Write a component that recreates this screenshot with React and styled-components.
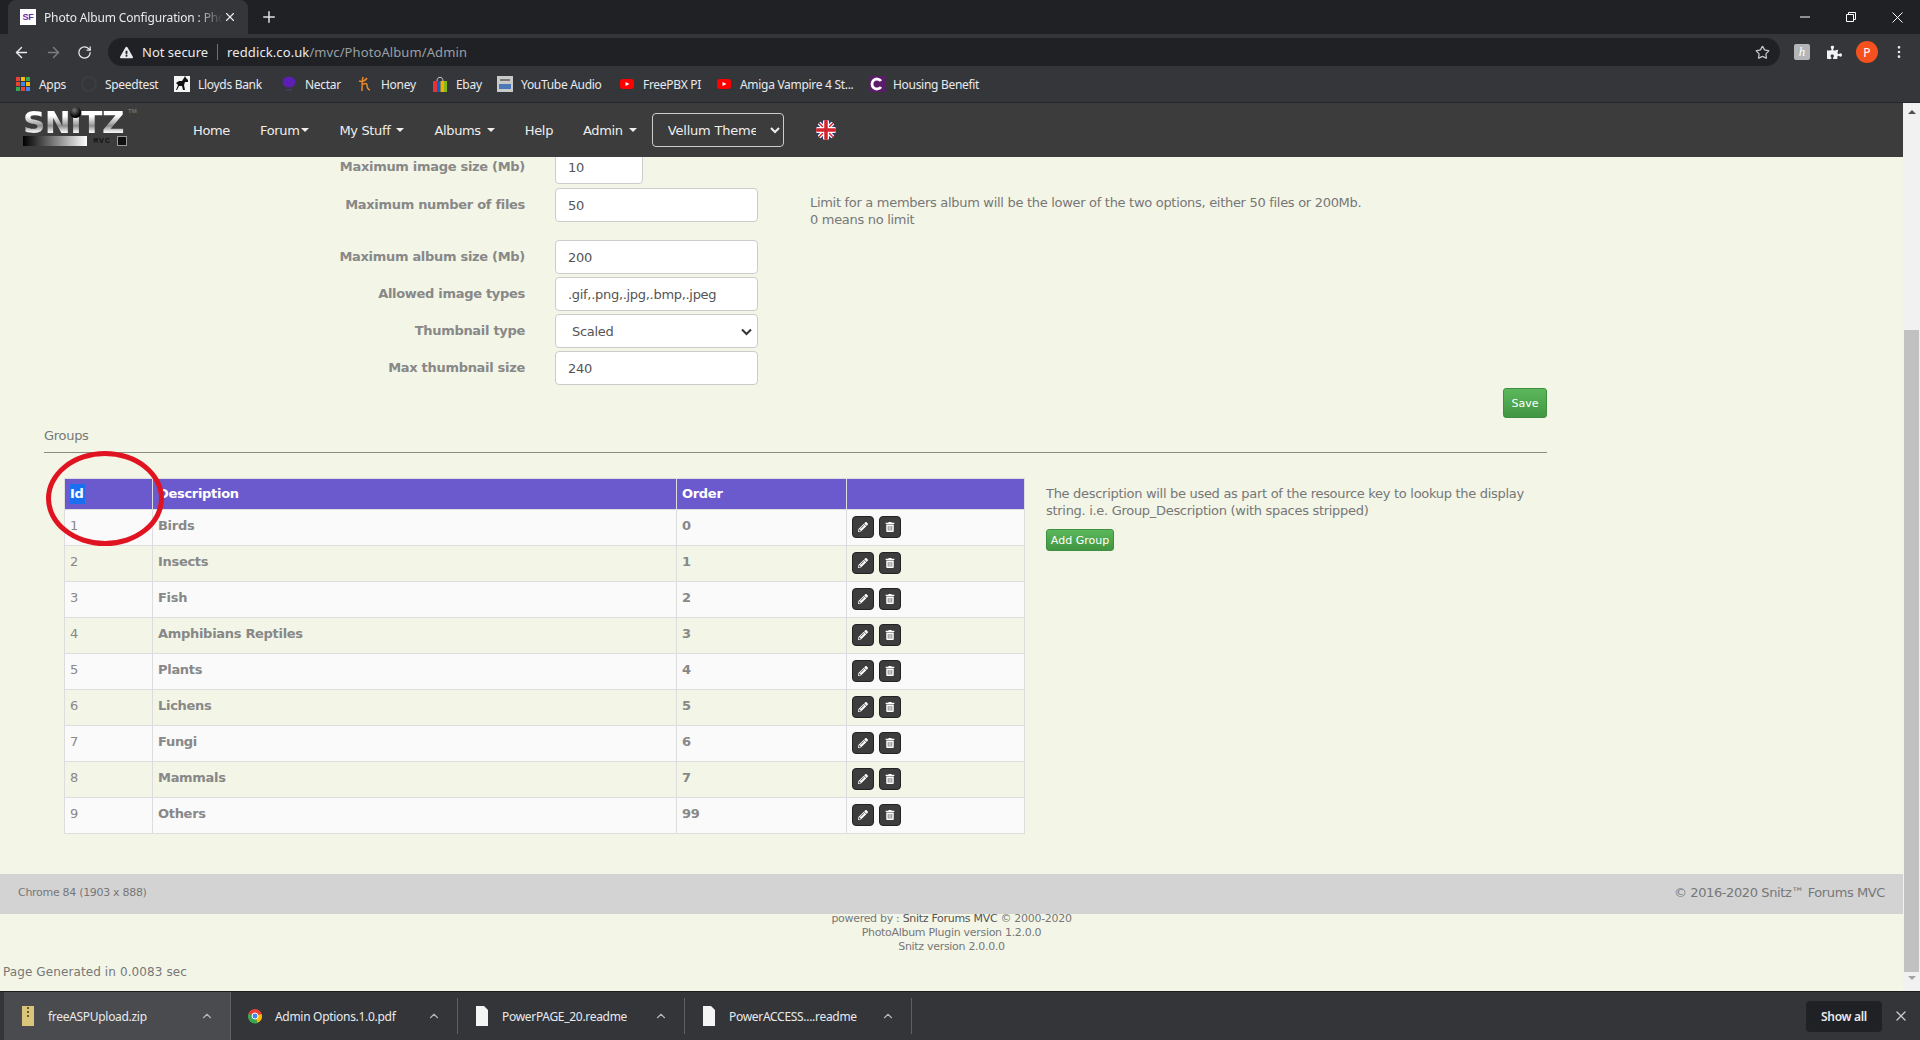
import React from "react";
import styled, { createGlobalStyle } from "styled-components";
import { ArrowLeft, ArrowRight, RotateCw, Star, Plus, X, EllipsisVertical, ChevronUp } from "lucide-react";
import { FaExclamationTriangle, FaPuzzlePiece, FaPencilAlt, FaTrashAlt } from "react-icons/fa";

const GlobalStyle = createGlobalStyle`
  html, body { margin: 0; padding: 0; height: 100%; overflow: hidden; }
  #root { height: 100%; }
  * { box-sizing: border-box; }
`;

const chromeFont = `"Noto Sans", "Liberation Sans", sans-serif`;
const pageFont = `"DejaVu Sans", "Liberation Sans", sans-serif`;

const Window = styled.div`
  width: 1920px;
  height: 1040px;
  display: flex;
  flex-direction: column;
  overflow: hidden;
  background: #f3f5e7;
  font-family: ${pageFont};
`;

const TabStrip = styled.div`
  height: 34px;
  flex: none;
  background: #202124;
  display: flex;
  padding-left: 8px;
  color: #e8eaed;
  font-family: ${chromeFont};
`;

const Tab = styled.div`
  width: 240px;
  height: 34px;
  background: #35363a;
  border-radius: 8px 8px 0 0;
  display: flex;
  align-items: center;
  padding: 0 11px 0 12px;
  font-size: 12px;
  letter-spacing: -0.15px;
`;

const Favicon = styled.div`
  width: 16px;
  height: 16px;
  background: #fff;
  color: #6a2bb0;
  font: bold 9px "Liberation Sans", sans-serif;
  display: flex;
  align-items: center;
  justify-content: center;
  margin-right: 8px;
  flex: none;
`;

const TabTitle = styled.div`
  flex: 1;
  white-space: nowrap;
  overflow: hidden;
  mask-image: linear-gradient(to right, #000 85%, transparent);
`;

const NewTab = styled.div`
  margin-left: 12px;
  display: flex;
  align-items: center;
  color: #dfe1e5;
`;

const WindowButtons = styled.div`
  margin-left: auto;
  display: flex;
  align-items: center;
  color: #fff;
`;

const WindowButton = styled.div`
  width: 46px;
  height: 28px;
  display: flex;
  align-items: center;
  justify-content: center;
`;

const Toolbar = styled.div`
  height: 36px;
  flex: none;
  background: #35363a;
  display: flex;
  align-items: center;
  padding-left: 13px;
  color: #e8eaed;
  font-family: ${chromeFont};
`;

const ToolIcon = styled.div`
  width: 32px;
  flex: none;
  display: flex;
  align-items: center;
  color: ${(p) => (p.$dim ? "#7b7d80" : "#e8eaed")};
`;

const AddressBar = styled.div`
  width: 1672px;
  margin-left: -1px;
  height: 28px;
  border-radius: 14px;
  background: #202124;
  display: flex;
  align-items: center;
  padding-left: 12px;
  font-size: 13px;
`;

const NotSecure = styled.span`
  margin-left: 9px;
  padding-right: 9px;
  border-right: 1px solid #70737a;
  line-height: 16px;
`;

const Host = styled.span`
  margin-left: 9px;
  letter-spacing: 0.1px;
`;

const Path = styled.span`
  color: #9aa0a6;
`;

const StarBox = styled.div`
  margin-left: auto;
  margin-right: 10px;
  display: flex;
  color: #c4c7ca;
`;

const ToolRight = styled.div`
  display: flex;
  align-items: center;
  margin-left: 14px;
`;

const ExtBox = styled.div`
  width: 16px;
  height: 16px;
  border-radius: 2px;
  background: #b4b5b7;
  color: #fff;
  font: italic 13px "Liberation Serif", serif;
  display: flex;
  align-items: center;
  justify-content: center;
`;

const Puzzle = styled.div`
  margin-left: 17px;
  display: flex;
  color: #f1f3f4;
`;

const Avatar = styled.div`
  margin-left: 14px;
  width: 22px;
  height: 22px;
  border-radius: 50%;
  background: #f4511e;
  color: #fff;
  font-size: 12px;
  display: flex;
  align-items: center;
  justify-content: center;
`;

const Dots = styled.div`
  margin-left: 13px;
  display: flex;
  color: #e8eaed;
`;

const Bookmarks = styled.div`
  height: 33px;
  flex: none;
  background: #35363a;
  border-bottom: 1px solid #26272a;
  display: flex;
  align-items: center;
  padding: 0 0 4px 15px;
  color: #e8eaed;
  font-size: 12px;
  letter-spacing: -0.3px;
  font-family: ${chromeFont};
`;

const Bookmark = styled.div`
  width: ${(p) => p.$w}px;
  flex: none;
  display: flex;
  align-items: center;
  white-space: nowrap;
`;

const BookmarkIcon = styled.svg`
  width: 16px;
  height: 16px;
  flex: none;
  margin-right: 8px;
`;

const Body = styled.div`
  flex: 1;
  min-height: 0;
  display: flex;
`;

const Page = styled.div`
  width: 1903px;
  flex: none;
  display: flex;
  flex-direction: column;
  min-height: 0;
`;

const NavBar = styled.div`
  height: 54px;
  flex: none;
  background: #3c3c3c;
  display: flex;
  align-items: center;
  padding-left: 23px;
  color: #eee;
  font-size: 13px;
  font-family: ${pageFont};
  position: relative;
  z-index: 2;
`;

const Logo = styled.div`
  width: 104px;
  height: 39px;
  flex: none;
  margin: 0 66px 7px 0;
  display: flex;
  flex-direction: column;
  position: relative;
`;

const LogoWord = styled.div`
  font: bold 31px/27px "DejaVu Sans", sans-serif;
  letter-spacing: -0.5px;
  height: 27px;
  margin-top: 2px;
  white-space: nowrap;
  background: linear-gradient(#ffffff 25%, #a8a8a8 55%, #8c8c8c 62%, #f2f2f2 85%);
  -webkit-background-clip: text;
  background-clip: text;
  color: transparent;
`;

const LogoBall = styled.div`
  position: absolute;
  left: 47px;
  top: 0;
  width: 11px;
  height: 11px;
  border-radius: 50%;
  background: radial-gradient(circle at 40% 30%, #777, #000 65%);
`;

const LogoMark = styled.div`
  position: absolute;
  left: 105px;
  top: 1px;
  font: 6px "Liberation Sans", sans-serif;
  color: #888;
`;

const LogoBar = styled.div`
  height: 10px;
  width: 104px;
  display: flex;
  align-items: center;
`;

const LogoFade = styled.div`
  width: 64px;
  height: 100%;
  background: linear-gradient(to right, #000, #fff);
`;

const LogoTag = styled.div`
  flex: 1;
  font: bold 8px/10px "Liberation Mono", monospace;
  letter-spacing: 1px;
  color: #141414;
  text-align: center;
`;

const LogoEnd = styled.div`
  width: 10px;
  height: 100%;
  background: #111;
  border: 1px solid #999;
`;

const NavItem = styled.div`
  margin-right: ${(p) => p.$gap ?? 30}px;
  white-space: nowrap;
  display: flex;
  align-items: center;
  letter-spacing: -0.35px;
`;

const Caret = styled.span`
  width: 0;
  height: 0;
  margin-left: ${(p) => p.$gap ?? 6}px;
  border-left: 4px solid transparent;
  border-right: 4px solid transparent;
  border-top: 4px solid #eee;
`;

const ThemeSelect = styled.select`
  width: 132px;
  height: 34px;
  background: #3c3c3c;
  color: #eee;
  border: 1px solid #ccc;
  border-radius: 4px;
  font: 13px ${pageFont};
  letter-spacing: -0.2px;
  padding: 0 11px;
  margin-right: 32px;
`;

const Flag = styled.svg`
  width: 20px;
  height: 20px;
  flex: none;
`;

const Scroller = styled.div`
  flex: 1;
  min-height: 0;
  overflow: hidden;
  position: relative;
`;

const ScrolledContent = styled.div`
  margin-top: -7px;
  display: flex;
  flex-direction: column;
  color: #777;
  font-size: 13px;
  letter-spacing: -0.3px;
`;

const FormRows = styled.div`
  display: flex;
  flex-direction: column;
`;

const FormRow = styled.div`
  display: flex;
  height: 34px;
  margin-bottom: ${(p) => p.$gap ?? 3}px;
  align-items: center;
`;

const Label = styled.div`
  width: 525px;
  flex: none;
  text-align: right;
  font-weight: bold;
  font-size: 13px;
  color: #888;
  margin-top: -2px;
`;

const Input = styled.div`
  margin-left: 30px;
  width: ${(p) => p.$w ?? 203}px;
  height: 34px;
  flex: none;
  background: #fff;
  border: 1px solid #ccc;
  border-radius: 4px;
  display: flex;
  align-items: center;
  padding-left: ${(p) => p.$pad ?? 12}px;
  color: #555;
  font-size: 13px;
  position: relative;
`;

const SelectArrow = styled.svg`
  position: absolute;
  right: 5px;
  top: 13px;
  width: 11px;
  height: 8px;
`;

const Hint = styled.div`
  margin-left: 52px;
  line-height: 17px;
  margin-top: 11px;
`;

const SaveRow = styled.div`
  width: 1547px;
  display: flex;
  justify-content: flex-end;
`;

const GreenButton = styled.div`
  background: linear-gradient(#5cb85c, #419641);
  border: 1px solid #3e8f3e;
  border-radius: 3px;
  color: #fff;
  font-size: 11px;
  letter-spacing: 0;
  display: flex;
  align-items: center;
  justify-content: center;
  width: ${(p) => p.$w}px;
  height: ${(p) => p.$h}px;
`;

const GroupsTitle = styled.div`
  margin: 9px 0 0 44px;
  width: 1503px;
  height: 26px;
  border-bottom: 1px solid #8b8d80;
  line-height: 18px;
  font-size: 13px;
`;

const GroupsArea = styled.div`
  display: flex;
  margin: 25px 0 0 64px;
  align-items: flex-start;
`;

const Table = styled.table`
  border-collapse: collapse;
  table-layout: fixed;
  width: 961px;
  flex: none;
`;

const Th = styled.th`
  background: #6a5acd;
  color: #fff;
  height: 31px;
  padding: 0 5px 1px;
  text-align: left;
  font-size: 13px;
  border: 1px solid #ddd;
  width: ${(p) => (p.$w ? `${p.$w}px` : "auto")};
`;

const Selected = styled.span`
  display: inline-block;
  background: #1a6ef0;
  line-height: 20px;
  padding-right: 1px;
`;

const Row = styled.tr`
  background: ${(p) => (p.$alt ? "#f3f5e7" : "#fafafa")};
`;

const Td = styled.td`
  height: 36px;
  padding: 6px 5px 0;
  vertical-align: top;
  border: 1px solid #ddd;
  color: #888;
  font-weight: ${(p) => (p.$bold ? "bold" : "normal")};
  font-size: 13px;
  line-height: 18px;
`;

const CellText = styled.div`
  margin-top: 1px;
`;

const Actions = styled.div`
  display: flex;
  gap: 5px;
`;

const ActionButton = styled.div`
  width: 22px;
  height: 22px;
  background: #3d3d3d;
  border: 1px solid #222;
  border-radius: 4px;
  color: #fff;
  display: flex;
  align-items: center;
  justify-content: center;
  font-size: 10px;
`;

const Side = styled.div`
  margin-left: 21px;
  width: 490px;
  padding-top: 7px;
  line-height: 17px;
`;

const SideText = styled.div`
  margin-bottom: 10px;
`;

const FooterBand = styled.div`
  margin-top: 40px;
  height: 40px;
  background: #d3d3d3;
  display: flex;
  align-items: center;
  justify-content: space-between;
  padding: 0 18px 3px;
  font-size: 11px;
`;

const Copyright = styled.div`
  font-size: 13px;
  letter-spacing: -0.4px;
`;

const PoweredBy = styled.div`
  margin-top: -2px;
  text-align: center;
  font-size: 11px;
  line-height: 14px;
  letter-spacing: -0.3px;
`;

const PoweredName = styled.span`
  color: #555;
`;

const Generated = styled.div`
  margin: 11px 0 0 3px;
  font-size: 12px;
  letter-spacing: 0.1px;
`;

const Circle = styled.div`
  position: absolute;
  left: 46px;
  top: 294px;
  width: 118px;
  height: 95px;
  border: 5px solid #e01420;
  border-radius: 50%;
  pointer-events: none;
`;

const ScrollBar = styled.div`
  width: 17px;
  flex: none;
  background: #f1f1f1;
  display: flex;
  flex-direction: column;
  align-items: center;
`;

const ScrollArrow = styled.div`
  width: 0;
  height: 0;
  margin-top: ${(p) => p.$top}px;
  border-left: 4px solid transparent;
  border-right: 4px solid transparent;
  ${(p) => (p.$down ? "border-top: 4px solid #a3a3a3;" : "border-bottom: 4px solid #505050;")}
`;

const ScrollThumb = styled.div`
  width: 15px;
  height: 642px;
  margin-top: 216px;
  background: #c1c1c1;
`;

const Downloads = styled.div`
  height: 49px;
  flex: none;
  background: #333539;
  border-top: 1px solid #1c1d1f;
  display: flex;
  align-items: center;
  padding-left: 4px;
  color: #e8eaed;
  font-size: 12px;
  letter-spacing: -0.3px;
  font-family: ${chromeFont};
`;

const DownloadItem = styled.div`
  width: 227px;
  height: ${(p) => (p.$active ? 48 : 36)}px;
  flex: none;
  display: flex;
  align-items: center;
  padding-left: 17px;
  background: ${(p) => (p.$active ? "#4a4b4f" : "transparent")};
  border-right: 1px solid #5f6063;
`;

const FileIcon = styled.svg`
  width: 14px;
  height: 20px;
  margin-right: 13px;
  flex: none;
`;

const FileName = styled.div`
  width: 120px;
  white-space: nowrap;
`;

const UpChevron = styled.div`
  display: flex;
  color: #b5b7ba;
  margin-left: 32px;
`;

const ShowAll = styled.div`
  margin-left: auto;
  width: 76px;
  height: 31px;
  background: #202124;
  border-radius: 4px;
  display: flex;
  align-items: center;
  justify-content: center;
  font-weight: 600;
  margin-right: 11px;
`;

const CloseBar = styled.div`
  display: flex;
  margin-right: 11px;
  color: #c8cacd;
`;

const rows = [
  ["1", "Birds", "0"],
  ["2", "Insects", "1"],
  ["3", "Fish", "2"],
  ["4", "Amphibians Reptiles", "3"],
  ["5", "Plants", "4"],
  ["6", "Lichens", "5"],
  ["7", "Fungi", "6"],
  ["8", "Mammals", "7"],
  ["9", "Others", "99"],
];

function App() {
  return (
    <Window>
      <GlobalStyle />
      <TabStrip>
        <Tab>
          <Favicon>SF</Favicon>
          <TabTitle>Photo Album Configuration : Photo Album</TabTitle>
          <X size={14} />
        </Tab>
        <NewTab>
          <Plus size={18} />
        </NewTab>
        <WindowButtons>
          <WindowButton>
            <svg width="10" height="10" viewBox="0 0 10 10"><path d="M0 5h10" stroke="#fff" /></svg>
          </WindowButton>
          <WindowButton>
            <svg width="10" height="10" viewBox="0 0 10 10" fill="none" stroke="#fff"><path d="M.5 2.5h7v7h-7zM2.5 2.5v-2h7v7h-2" /></svg>
          </WindowButton>
          <WindowButton>
            <svg width="11" height="11" viewBox="0 0 11 11" stroke="#fff"><path d="M.5.5l10 10M10.5.5l-10 10" /></svg>
          </WindowButton>
        </WindowButtons>
      </TabStrip>

      <Toolbar>
        <ToolIcon><ArrowLeft size={17} /></ToolIcon>
        <ToolIcon $dim><ArrowRight size={17} /></ToolIcon>
        <ToolIcon><RotateCw size={15} /></ToolIcon>
        <AddressBar>
          <FaExclamationTriangle size={13} />
          <NotSecure>Not secure</NotSecure>
          <Host>reddick.co.uk<Path>/mvc/PhotoAlbum/Admin</Path></Host>
          <StarBox><Star size={15} /></StarBox>
        </AddressBar>
        <ToolRight>
          <ExtBox>h</ExtBox>
          <Puzzle><FaPuzzlePiece size={15} /></Puzzle>
          <Avatar>P</Avatar>
          <Dots><EllipsisVertical size={16} /></Dots>
        </ToolRight>
      </Toolbar>

      <Bookmarks>
        <Bookmark $w={66}>
          <BookmarkIcon viewBox="0 0 16 16">
            <path fill="#ea4335" d="M1 1h4v4H1z" /><path fill="#fbbc04" d="M6 1h4v4H6z" /><path fill="#34a853" d="M11 1h4v4h-4z" />
            <path fill="#ea4335" d="M1 6h4v4H1z" /><path fill="#4285f4" d="M6 6h4v4H6z" /><path fill="#fbbc04" d="M11 6h4v4h-4z" />
            <path fill="#34a853" d="M1 11h4v4H1z" /><path fill="#ea4335" d="M6 11h4v4H6z" /><path fill="#4285f4" d="M11 11h4v4h-4z" />
          </BookmarkIcon>
          Apps
        </Bookmark>
        <Bookmark $w={93}>
          <BookmarkIcon viewBox="0 0 16 16"><circle cx="8" cy="8" r="7" fill="none" stroke="#3c3d41" strokeWidth="2" /></BookmarkIcon>
          Speedtest
        </Bookmark>
        <Bookmark $w={107}>
          <BookmarkIcon viewBox="0 0 16 16">
            <path fill="#f4f4f4" d="M0 0h16v16H0z" />
            <path fill="#111" d="M2 7l3-2 3 0 2-3 1-2 1 2 2 2 0 2-3 0-1 3 1 5h-2l-1-4-3 0-2 4H2l2-5-1-1z" />
          </BookmarkIcon>
          Lloyds Bank
        </Bookmark>
        <Bookmark $w={76}>
          <BookmarkIcon viewBox="0 0 16 16">
            <ellipse cx="8" cy="6" rx="6.5" ry="5.5" fill="#5b1fb3" />
            <path fill="#4b3a6a" d="M5 13h6v1.500H5z" />
          </BookmarkIcon>
          Nectar
        </Bookmark>
        <Bookmark $w={75}>
          <BookmarkIcon viewBox="0 0 16 16" fill="none" stroke="#e8892b" strokeWidth="1.500">
            <path d="M6 1c-1 4-1 9-1 14M2 5c3 1 6 0 8-3M5 9c2-2 5-2 5 0 0 2 0 4 3 5" />
          </BookmarkIcon>
          Honey
        </Bookmark>
        <Bookmark $w={65}>
          <BookmarkIcon viewBox="0 0 16 16">
            <path fill="#e53238" d="M1 5h4v11H1z" /><path fill="#0064d2" d="M5 5h3.500v11H5z" />
            <path fill="#f5af02" d="M8.500 5H12v11H8.500z" /><path fill="#86b817" d="M12 5h3v11h-3z" />
            <path fill="none" stroke="#ccc" d="M5 5c0-5 6-5 6 0" />
          </BookmarkIcon>
          Ebay
        </Bookmark>
        <Bookmark $w={122}>
          <BookmarkIcon viewBox="0 0 16 16">
            <path fill="#c9c9c9" d="M0 0h16v16H0z" /><path fill="#777" d="M3 3h10v2H3z" /><path fill="#4a78b8" d="M2 8h12v5H2z" />
          </BookmarkIcon>
          YouTube Audio
        </Bookmark>
        <Bookmark $w={97}>
          <BookmarkIcon viewBox="0 0 16 16">
            <rect x="1" y="3" width="14" height="10" rx="3" fill="#f00" /><path fill="#fff" d="M6.500 6l4 2-4 2z" />
          </BookmarkIcon>
          FreePBX PI
        </Bookmark>
        <Bookmark $w={153}>
          <BookmarkIcon viewBox="0 0 16 16">
            <rect x="1" y="3" width="14" height="10" rx="3" fill="#f00" /><path fill="#fff" d="M6.500 6l4 2-4 2z" />
          </BookmarkIcon>
          Amiga Vampire 4 St...
        </Bookmark>
        <Bookmark $w={130}>
          <BookmarkIcon viewBox="0 0 16 16">
            <path fill="#5c1a6b" d="M0 0h16v16H0z" />
            <path fill="none" stroke="#fff" strokeWidth="2.800" d="M12 5a5 5 0 1 0 0 6" />
          </BookmarkIcon>
          Housing Benefit
        </Bookmark>
      </Bookmarks>

      <Body>
        <Page>
          <NavBar>
            <Logo>
              <LogoWord>SNITZ</LogoWord>
              <LogoBall />
              <LogoMark>TM</LogoMark>
              <LogoBar>
                <LogoFade />
                <LogoTag>MVC</LogoTag>
                <LogoEnd />
              </LogoBar>
            </Logo>
            <NavItem>Home</NavItem>
            <NavItem>Forum<Caret $gap={2} /></NavItem>
            <NavItem>My Stuff<Caret /></NavItem>
            <NavItem>Albums<Caret /></NavItem>
            <NavItem>Help</NavItem>
            <NavItem $gap={15}>Admin<Caret /></NavItem>
            <ThemeSelect defaultValue="Vellum Theme">
              <option>Vellum Theme</option>
            </ThemeSelect>
            <Flag viewBox="0 0 20 20">
              <defs>
                <clipPath id="flagClip"><circle cx="10" cy="10" r="10" /></clipPath>
              </defs>
              <g clipPath="url(#flagClip)">
                <path fill="#2b3a7d" d="M0 0h20v20H0z" />
                <path stroke="#fff" strokeWidth="4" d="M0 0l20 20M20 0L0 20" />
                <path stroke="#d2232f" strokeWidth="1.500" d="M0 0l20 20M20 0L0 20" />
                <path stroke="#fff" strokeWidth="6" d="M10 0v20M0 10h20" />
                <path stroke="#d2232f" strokeWidth="3.500" d="M10 0v20M0 10h20" />
              </g>
            </Flag>
          </NavBar>

          <Scroller>
            <ScrolledContent>
              <FormRows>
                <FormRow $gap={4}>
                  <Label>Maximum image size (Mb)</Label>
                  <Input $w={88}>10</Input>
                </FormRow>
                <FormRow $gap={18}>
                  <Label>Maximum number of files</Label>
                  <Input>50</Input>
                  <Hint>
                    Limit for a members album will be the lower of the two options, either 50 files or 200Mb.
                    <br />
                    0 means no limit
                  </Hint>
                </FormRow>
                <FormRow>
                  <Label>Maximum album size (Mb)</Label>
                  <Input>200</Input>
                </FormRow>
                <FormRow>
                  <Label>Allowed image types</Label>
                  <Input>.gif,.png,.jpg,.bmp,.jpeg</Input>
                </FormRow>
                <FormRow>
                  <Label>Thumbnail type</Label>
                  <Input $pad={16}>
                    Scaled
                    <SelectArrow viewBox="0 0 11 8" fill="none" stroke="#333" strokeWidth="2"><path d="M1 1.500l4.500 4.500 4.500-4.500" /></SelectArrow>
                  </Input>
                </FormRow>
                <FormRow>
                  <Label>Max thumbnail size</Label>
                  <Input>240</Input>
                </FormRow>
              </FormRows>
              <SaveRow>
                <GreenButton $w={44} $h={30}>Save</GreenButton>
              </SaveRow>
              <GroupsTitle>Groups</GroupsTitle>
              <GroupsArea>
                <Table>
                  <thead>
                    <tr>
                      <Th $w={88}><Selected>Id</Selected></Th>
                      <Th $w={524}>Description</Th>
                      <Th $w={170}>Order</Th>
                      <Th />
                    </tr>
                  </thead>
                  <tbody>
                    {rows.map((r, i) => (
                      <Row key={r[0]} $alt={i % 2 === 1}>
                        <Td><CellText>{r[0]}</CellText></Td>
                        <Td $bold><CellText>{r[1]}</CellText></Td>
                        <Td $bold><CellText>{r[2]}</CellText></Td>
                        <Td>
                          <Actions>
                            <ActionButton><FaPencilAlt /></ActionButton>
                            <ActionButton><FaTrashAlt /></ActionButton>
                          </Actions>
                        </Td>
                      </Row>
                    ))}
                  </tbody>
                </Table>
                <Side>
                  <SideText>
                    The description will be used as part of the resource key to lookup the display
                    string. i.e. Group_Description (with spaces stripped)
                  </SideText>
                  <GreenButton $w={68} $h={22}>Add Group</GreenButton>
                </Side>
              </GroupsArea>
              <FooterBand>
                <div>Chrome 84 (1903 x 888)</div>
                <Copyright>© 2016-2020 Snitz™ Forums MVC</Copyright>
              </FooterBand>
              <PoweredBy>
                powered by : <PoweredName>Snitz Forums MVC</PoweredName> © 2000-2020
                <br />
                PhotoAlbum Plugin version 1.2.0.0
                <br />
                Snitz version 2.0.0.0
              </PoweredBy>
              <Generated>Page Generated in 0.0083 sec</Generated>
            </ScrolledContent>
            <Circle />
          </Scroller>
        </Page>
        <ScrollBar>
          <ScrollArrow $top={7} />
          <ScrollThumb />
          <ScrollArrow $down $top={4} />
        </ScrollBar>
      </Body>

      <Downloads>
        <DownloadItem $active>
          <FileIcon viewBox="0 0 14 20">
            <path fill="#d9c67a" d="M1 0h12v20H1z" /><path fill="#6b5a26" d="M6 1h2v2H6zM6 5h2v2H6zM6 9h2v2H6z" />
          </FileIcon>
          <FileName>freeASPUpload.zip</FileName>
          <UpChevron><ChevronUp size={14} /></UpChevron>
        </DownloadItem>
        <DownloadItem>
          <FileIcon viewBox="0 0 14 20">
            <circle cx="7" cy="10" r="7" fill="#ea4335" />
            <path fill="#fbbc04" d="M7 10l6.500-2a7 7 0 0 1-4 9z" /><path fill="#34a853" d="M7 10l2.500 7A7 7 0 0 1 .5 8z" />
            <circle cx="7" cy="10" r="3" fill="#4285f4" stroke="#fff" />
          </FileIcon>
          <FileName>Admin Options.1.0.pdf</FileName>
          <UpChevron><ChevronUp size={14} /></UpChevron>
        </DownloadItem>
        <DownloadItem>
          <FileIcon viewBox="0 0 14 20"><path fill="#f5f5f5" d="M1 0h8l4 4v16H1z" /></FileIcon>
          <FileName>PowerPAGE_20.readme</FileName>
          <UpChevron><ChevronUp size={14} /></UpChevron>
        </DownloadItem>
        <DownloadItem>
          <FileIcon viewBox="0 0 14 20"><path fill="#f5f5f5" d="M1 0h8l4 4v16H1z" /></FileIcon>
          <FileName>PowerACCESS....readme</FileName>
          <UpChevron><ChevronUp size={14} /></UpChevron>
        </DownloadItem>
        <ShowAll>Show all</ShowAll>
        <CloseBar><X size={16} /></CloseBar>
      </Downloads>
    </Window>
  );
}

export default App;
